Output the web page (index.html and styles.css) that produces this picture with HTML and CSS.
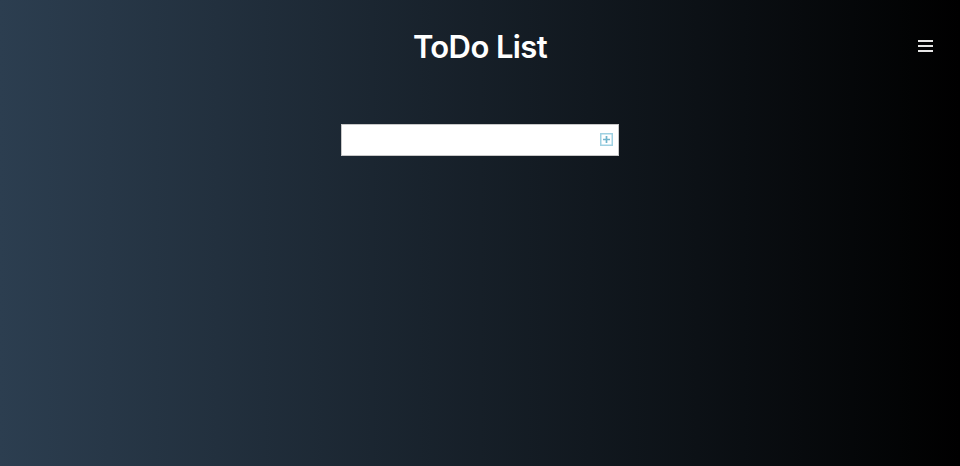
FILE: index.html
```html
<!DOCTYPE html>
<html lang="en">
<head>
<meta charset="utf-8">
<title>ToDo List</title>
<link rel="stylesheet" href="styles.css">
</head>
<body>
<header class="header">
  <h1 class="title">ToDo List</h1>
  <button class="menu" aria-label="Menu">
    <span class="bar"></span><span class="bar"></span><span class="bar"></span>
  </button>
</header>
<main class="main">
  <form class="todo-form">
    <input class="todo-input" type="text">
    <button class="add-btn" type="button" aria-label="Add">
      <svg width="13" height="13" viewBox="0 0 13 13">
        <rect x="0.75" y="0.75" width="11.5" height="11.5" fill="none" stroke="#9fd1e2" stroke-width="1.5"/>
        <path d="M6.5 3v7M3 6.5h7" stroke="#6fb4cc" stroke-width="1.7"/>
      </svg>
    </button>
  </form>
</main>
</body>
</html>
```
FILE: styles.css
```css
html, body {
  margin: 0;
  padding: 0;
  height: 100%;
}
body {
  background: linear-gradient(to right, #2c3e50, #000000);
  font-family: "Inter", "Noto Sans", sans-serif;
  color: #fff;
  min-height: 466px;
}
.header {
  position: relative;
  display: flex;
  justify-content: center;
  align-items: center;
  height: 92px;
}
.title {
  margin: 0;
  font-size: 31px;
  font-weight: 600;
  letter-spacing: -0.6px;
  line-height: 1;
  padding-top: 1px;
}
.menu {
  position: absolute;
  right: 27px;
  top: 40px;
  background: none;
  border: 0;
  padding: 0;
  width: 15px;
  display: flex;
  flex-direction: column;
  gap: 3px;
  cursor: pointer;
}
.bar {
  display: block;
  height: 2px;
  width: 15px;
  background: #e6e6e6;
}
.main {
  display: flex;
  justify-content: center;
  padding-top: 32px;
}
.todo-form {
  display: flex;
  align-items: center;
  width: 276px;
  height: 30px;
  background: #fff;
  border: 1px solid #c8c8c8;
}
.todo-input {
  flex: 1;
  border: 0;
  outline: none;
  height: 100%;
  padding: 0 8px;
  background: transparent;
  font-family: "Inter", sans-serif;
}
.add-btn {
  border: 0;
  background: none;
  padding: 0;
  margin-right: 5px;
  display: flex;
  margin-top: -1px;
}
```
